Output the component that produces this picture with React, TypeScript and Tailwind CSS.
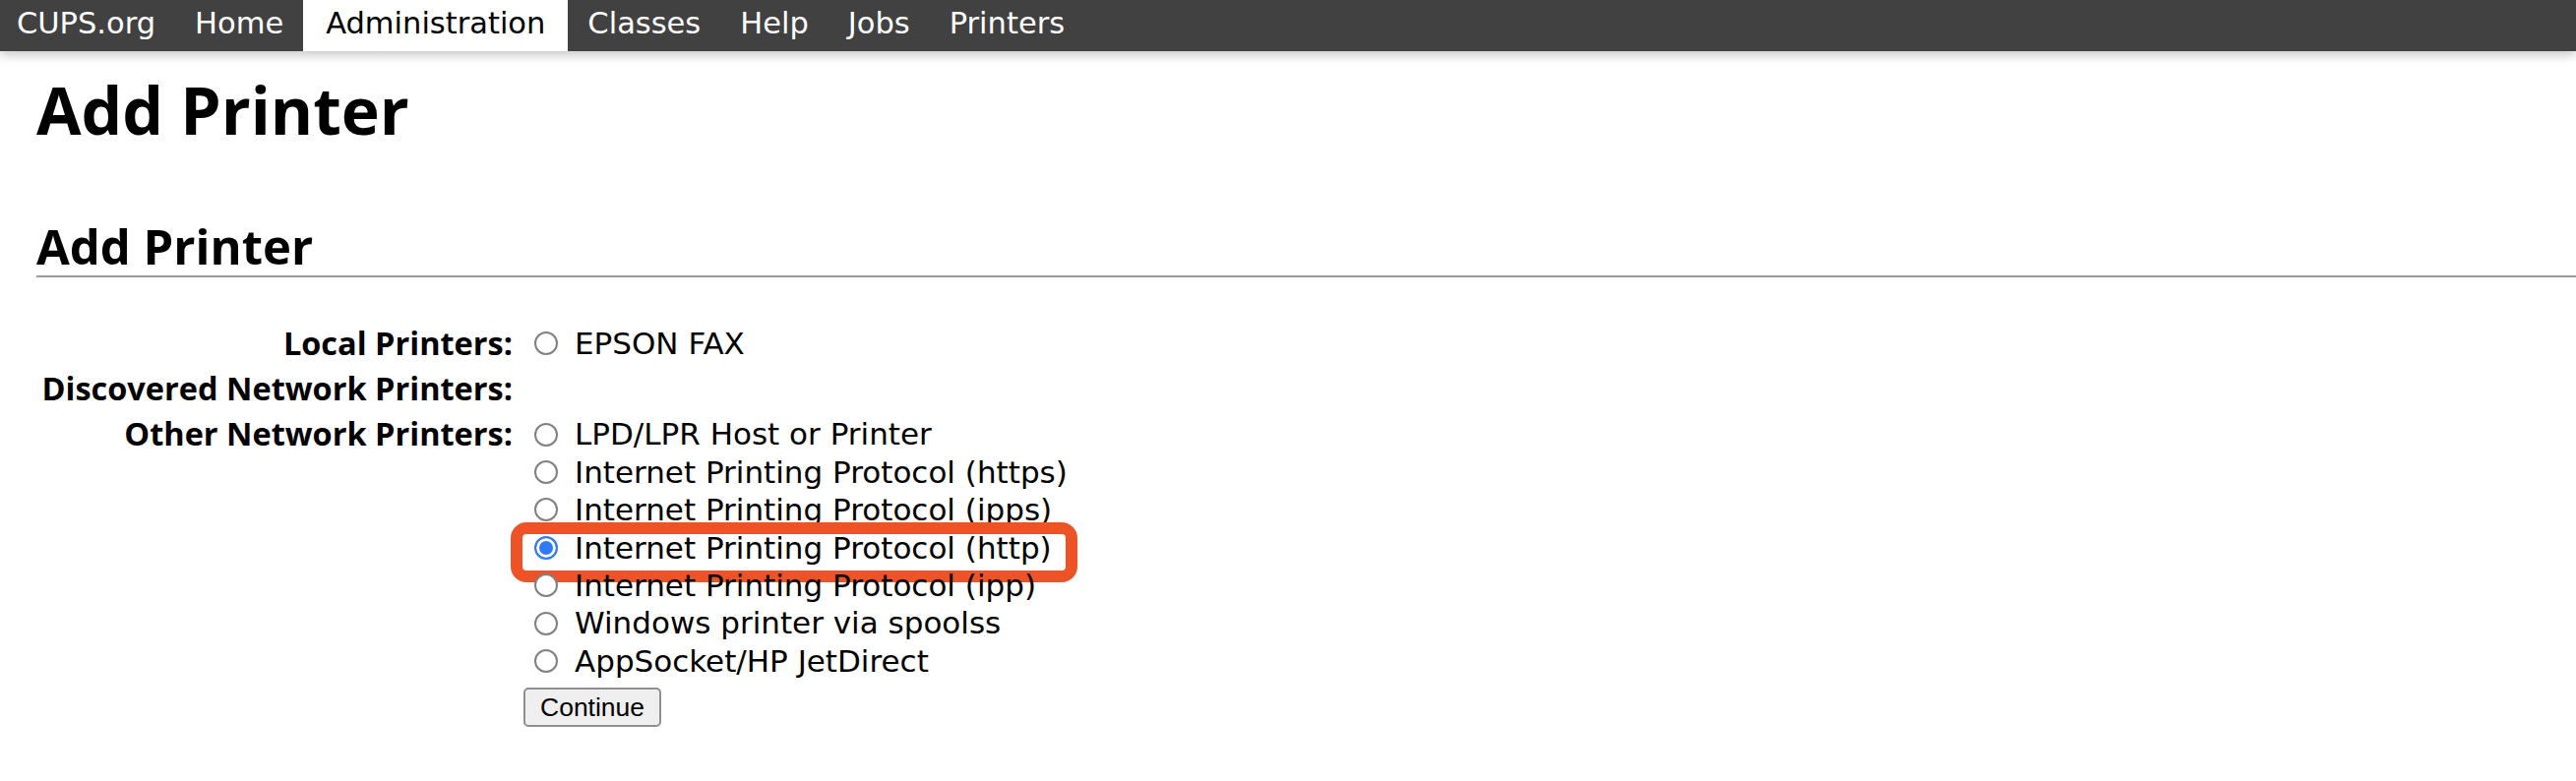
import { useState } from "react";

const navLinks = ["CUPS.org", "Home", "Administration", "Classes", "Help", "Jobs", "Printers"];

const otherPrinters = [
  "LPD/LPR Host or Printer",
  "Internet Printing Protocol (https)",
  "Internet Printing Protocol (ipps)",
  "Internet Printing Protocol (http)",
  "Internet Printing Protocol (ipp)",
  "Windows printer via spoolss",
  "AppSocket/HP JetDirect",
];

const Radio = ({ checked, onChange }: { checked: boolean; onChange: () => void }) => (
  <input
    type="radio"
    name="device"
    checked={checked}
    onChange={onChange}
    className="relative m-0 w-[24px] h-[24px] shrink-0 appearance-none rounded-full border-2 border-[#808080] bg-white checked:border-[#2f7bf5] checked:bg-[#2f7bf5] checked:shadow-[inset_0_0_0_3px_white]"
  />
);

const Option = ({
  label,
  checked,
  onChange,
  highlight,
}: {
  label: string;
  checked: boolean;
  onChange: () => void;
  highlight?: boolean;
}) => (
  <label className="relative flex h-[38.4px] items-center gap-[17px] whitespace-nowrap">
    {highlight && (
      <span className="absolute -left-[24px] -top-[7px] h-[61px] w-[576px] rounded-[16px] border-[12px] border-[#ee5327] bg-white" />
    )}
    <Radio checked={checked} onChange={onChange} />
    <span className="relative">{label}</span>
  </label>
);

const labelCls =
  "py-[4px] text-right text-[32.5px] font-bold leading-[38px] whitespace-nowrap font-['Open_Sans',sans-serif]";

export default function App() {
  const [selected, setSelected] = useState("Internet Printing Protocol (http)");

  return (
    <div className="min-h-screen bg-white text-black font-['DejaVu_Sans',sans-serif]">
      <nav className="relative z-10 flex h-[52px] bg-[#414141] text-[30.5px] leading-[48px] text-white shadow-[0_4px_10px_rgba(0,0,0,0.22)]">
        {navLinks.map((link, i) => (
          <a
            key={link}
            href="#"
            className={
              link === "Administration"
                ? "h-[52px] bg-white px-[23px] text-black"
                : i === 0
                  ? "h-[52px] pl-[17px] pr-[20px]"
                  : "h-[52px] px-[20px]"
            }
          >
            {link}
          </a>
        ))}
      </nav>

      <div className="pl-[37px] pb-[40px]">
        <h1 className="mt-[26px] text-[66px] font-bold leading-none font-['Open_Sans',sans-serif]">
          Add Printer
        </h1>
        <h2 className="mt-[82px] border-b-2 border-[#999999] pb-[5px] text-[49px] font-bold leading-none font-['Open_Sans',sans-serif]">
          Add Printer
        </h2>

        <form className="mt-[44px] grid grid-cols-[484px_1fr] gap-x-[22px] text-[31px]">
          <div className={labelCls}>Local Printers:</div>
          <div className="py-[4px]">
            <Option
              label="EPSON FAX"
              checked={selected === "EPSON FAX"}
              onChange={() => setSelected("EPSON FAX")}
            />
          </div>

          <div className={labelCls}>Discovered Network Printers:</div>
          <div className="py-[4px]" />

          <div className={labelCls}>Other Network Printers:</div>
          <div className="py-[4px]">
            {otherPrinters.map((p) => (
              <Option
                key={p}
                label={p}
                checked={selected === p}
                onChange={() => setSelected(p)}
                highlight={p === "Internet Printing Protocol (http)"}
              />
            ))}
            <button
              type="button"
              className="-ml-[11px] mt-[8px] h-[40px] rounded-[5px] border-2 border-[#8f8f8f] bg-[#efefef] px-[15px] text-[26.5px] leading-none text-black font-['Liberation_Sans',sans-serif]"
            >
              Continue
            </button>
          </div>
        </form>
      </div>
    </div>
  );
}
